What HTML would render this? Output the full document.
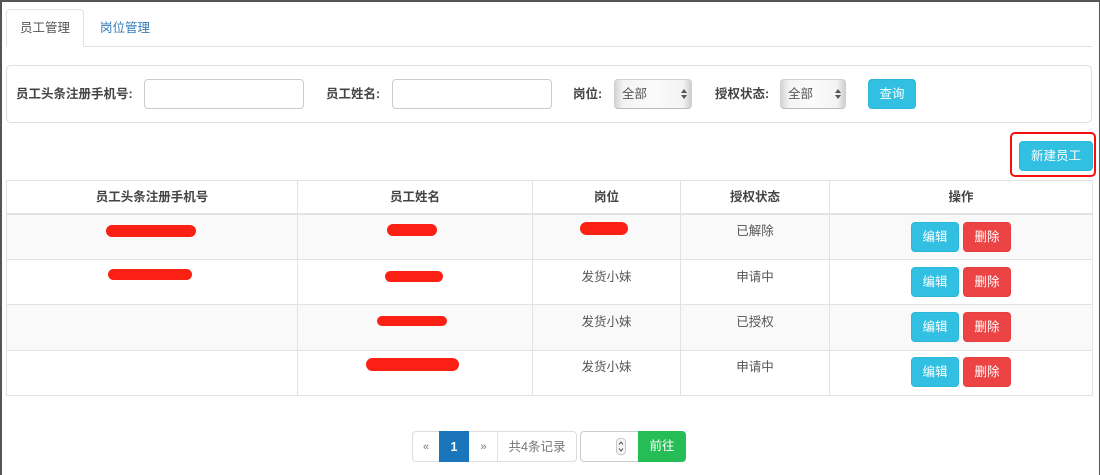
<!DOCTYPE html>
<html lang="zh">
<head>
<meta charset="utf-8">
<title>员工管理</title>
<style>
html,body{margin:0;padding:0;background:#fff}
#p{position:relative;width:1100px;height:475px;overflow:hidden;background:#fff;font-family:"Liberation Sans","Noto Sans CJK SC",sans-serif;font-size:12.5px;color:#444}
#p div,#p span.a{position:absolute;box-sizing:border-box}
.t{text-align:center;line-height:20px;white-space:nowrap}
.l{font-weight:bold;color:#444;line-height:20px;white-space:nowrap;top:84px}
.i{background:#fff;border:1px solid #ccc;border-radius:4px;top:79px;height:30px;width:160px}
.s{top:79px;height:30px;border:1px solid #d0d0d0;border-bottom-color:#bbb;border-radius:4px;background:linear-gradient(90deg,#d4d4d4 0,#f3f3f3 8px,#fbfbfb 50%,#f3f3f3 calc(100% - 8px),#cfcfcf 100%);line-height:28px;padding-left:7px;color:#555}
.s svg{position:absolute;right:3px;top:8px}
.b{height:30px;border-radius:4px;color:#fff;text-align:center;line-height:29px;white-space:nowrap}
.in{background:#31c0e2;border:1px solid #2cb8da}
.da{background:#ec4444;border:1px solid #e63d3d}
.g{background:#e2e2e2}
.r{background:#fa2013;border-radius:7px}
.h{font-weight:bold;top:187px;color:#444}
</style>
</head>
<body>
<div id="p">
<!-- window edges -->
<div style="left:0;top:0;width:1100px;height:2px;background:#555"></div>
<div style="left:0;top:0;width:2px;height:475px;background:#555"></div>
<div style="left:1099px;top:0;width:1px;height:475px;background:#555"></div>

<!-- tabs -->
<div class="g" style="left:6px;top:46px;width:1086px;height:1px"></div>
<div style="left:6px;top:9px;width:78px;height:38px;background:#fff;border:1px solid #e2e2e2;border-bottom:0;border-radius:4px 4px 0 0"></div>
<div class="t" style="left:6px;top:18px;width:78px;color:#555">员工管理</div>
<div class="t" style="left:86px;top:18px;width:78px;color:#337ab7">岗位管理</div>

<!-- filter panel -->
<div style="left:6px;top:65px;width:1086px;height:58px;border:1px solid #ddd;border-radius:5px"></div>
<div class="l" style="left:16px">员工头条注册手机号:</div>
<div class="i" style="left:144px"></div>
<div class="l" style="left:326px">员工姓名:</div>
<div class="i" style="left:392px"></div>
<div class="l" style="left:573px">岗位:</div>
<div class="s" style="left:614px;width:78px">全部<svg width="8" height="12" viewBox="0 0 8 12"><path d="M4 1L7 5H1ZM4 11L1 7H7Z" fill="#555"/></svg></div>
<div class="l" style="left:715px">授权状态:</div>
<div class="s" style="left:780px;width:66px">全部<svg width="8" height="12" viewBox="0 0 8 12"><path d="M4 1L7 5H1ZM4 11L1 7H7Z" fill="#555"/></svg></div>
<div class="b in" style="left:868px;top:79px;width:48px">查询</div>

<!-- new button -->
<div style="left:1010px;top:132px;width:86px;height:45px;border:2px solid #f5100c;border-radius:5px"></div>
<div class="b in" style="left:1019px;top:141px;width:74px">新建员工</div>

<!-- table -->
<div style="left:7px;top:214px;width:1084px;height:45px;background:#f9f9f9"></div>
<div style="left:7px;top:305px;width:1084px;height:45px;background:#f9f9f9"></div>

<div class="g" style="left:6px;top:180px;width:1087px;height:1px"></div>
<div class="g" style="left:6px;top:213px;width:1087px;height:2px"></div>
<div class="g" style="left:6px;top:259px;width:1087px;height:1px"></div>
<div class="g" style="left:6px;top:304px;width:1087px;height:1px"></div>
<div class="g" style="left:6px;top:350px;width:1087px;height:1px"></div>
<div class="g" style="left:6px;top:395px;width:1087px;height:1px"></div>
<div class="g" style="left:6px;top:180px;width:1px;height:216px"></div>
<div class="g" style="left:297px;top:180px;width:1px;height:216px"></div>
<div class="g" style="left:532px;top:180px;width:1px;height:216px"></div>
<div class="g" style="left:680px;top:180px;width:1px;height:216px"></div>
<div class="g" style="left:829px;top:180px;width:1px;height:216px"></div>
<div class="g" style="left:1092px;top:180px;width:1px;height:216px"></div>

<div class="t h" style="left:7px;width:290px">员工头条注册手机号</div>
<div class="t h" style="left:298px;width:234px">员工姓名</div>
<div class="t h" style="left:533px;width:147px">岗位</div>
<div class="t h" style="left:681px;width:148px">授权状态</div>
<div class="t h" style="left:830px;width:262px">操作</div>

<!-- rows -->
<div class="t" style="left:533px;top:267px;width:147px;color:#555">发货小妹</div>
<div class="t" style="left:533px;top:312px;width:147px;color:#555">发货小妹</div>
<div class="t" style="left:533px;top:357px;width:147px;color:#555">发货小妹</div>
<div class="t" style="left:681px;top:221px;width:148px;color:#555">已解除</div>
<div class="t" style="left:681px;top:267px;width:148px;color:#555">申请中</div>
<div class="t" style="left:681px;top:312px;width:148px;color:#555">已授权</div>
<div class="t" style="left:681px;top:357px;width:148px;color:#555">申请中</div>

<!-- redaction marks -->
<div class="r" style="left:106px;top:225px;width:90px;height:12px"></div>
<div class="r" style="left:108px;top:269px;width:84px;height:11px"></div>
<div class="r" style="left:387px;top:224px;width:50px;height:12px"></div>
<div class="r" style="left:385px;top:271px;width:58px;height:11px"></div>
<div class="r" style="left:377px;top:316px;width:70px;height:10px"></div>
<div class="r" style="left:366px;top:358px;width:93px;height:13px"></div>
<div class="r" style="left:580px;top:222px;width:48px;height:13px"></div>

<!-- row buttons -->
<div class="b in" style="left:911px;top:222px;width:48px">编辑</div>
<div class="b da" style="left:963px;top:222px;width:48px">删除</div>
<div class="b in" style="left:911px;top:267px;width:48px">编辑</div>
<div class="b da" style="left:963px;top:267px;width:48px">删除</div>
<div class="b in" style="left:911px;top:312px;width:48px">编辑</div>
<div class="b da" style="left:963px;top:312px;width:48px">删除</div>
<div class="b in" style="left:911px;top:357px;width:48px">编辑</div>
<div class="b da" style="left:963px;top:357px;width:48px">删除</div>

<!-- pagination -->
<div style="left:412px;top:431px;width:165px;height:31px;border:1px solid #ddd;border-radius:4px"></div>
<div class="t" style="left:413px;top:437px;width:26px;color:#777;font-size:11px">«</div>
<div style="left:439px;top:431px;width:30px;height:31px;background:#1b75bb"></div>
<div class="t" style="left:439px;top:437px;width:30px;color:#fff;font-weight:bold">1</div>
<div class="t" style="left:470px;top:437px;width:27px;color:#777;font-size:11px">»</div>
<div class="g" style="left:497px;top:431px;width:1px;height:31px"></div>
<div class="t" style="left:498px;top:437px;width:78px;color:#777">共4条记录</div>
<div style="left:580px;top:431px;width:60px;height:31px;border:1px solid #ccc;border-radius:4px 0 0 4px;background:#fff"></div>
<div style="left:616px;top:438px;width:10px;height:17px;border:1px solid #c8c8c8;border-radius:4px;background:#f5f5f5">
<svg width="8" height="15" viewBox="0 0 8 15" style="display:block"><path d="M2 5.5L4 3L6 5.5M2 9.5L4 12L6 9.5" fill="none" stroke="#444" stroke-width="1"/></svg>
</div>
<div class="b" style="left:638px;top:431px;width:48px;height:31px;background:#27bd56;border-radius:0 4px 4px 0;line-height:30px">前往</div>
</div>
</body>
</html>
